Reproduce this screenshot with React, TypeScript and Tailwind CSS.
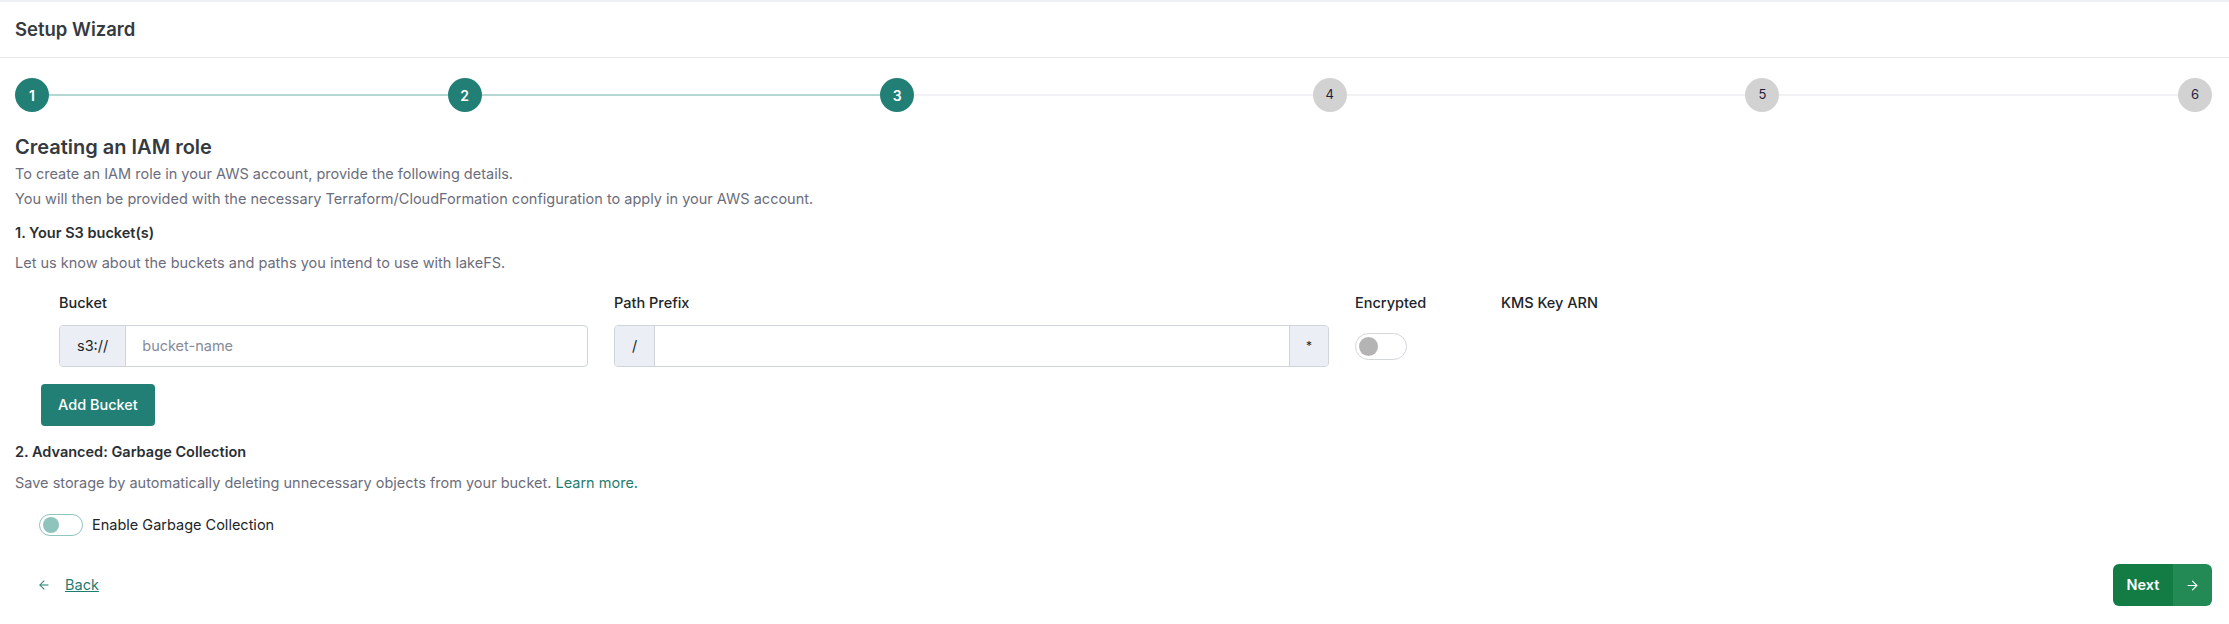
import { FC, useState } from "react";
import { ArrowLeft, ArrowRight } from "lucide-react";

const steps = [1, 2, 3, 4, 5, 6];
const current = 3;

const Stepper: FC = () => {
  return (
    <div className="flex items-center mt-[20px]">
      {steps.map((s, i) => (
        <div key={s} className={i === 0 ? "flex items-center" : "flex items-center flex-1"}>
          {i > 0 && (
            <div
              className={
                s <= current
                  ? "flex-1 h-[2px] bg-[#b5d7d2]"
                  : "flex-1 h-[2px] bg-[#f1f1f6]"
              }
            />
          )}
          <div
            className={
              s <= current
                ? "w-[34px] h-[34px] rounded-full bg-[#217f75] text-white text-[14px] font-semibold flex items-center justify-center"
                : "w-[34px] h-[34px] rounded-full bg-[#d2d2d2] text-[#1f1d3a] text-[13px] flex items-center justify-center"
            }
          >
            {s}
          </div>
        </div>
      ))}
    </div>
  );
};

const Toggle: FC<{ on: boolean; onClick: () => void; small?: boolean }> = ({ on, onClick, small }) => {
  if (small) {
    return (
      <button
        onClick={onClick}
        className="w-[44px] h-[22px] rounded-full border border-[#8fc5bd] flex items-center px-[3px] bg-white"
      >
        <span className={on ? "ml-auto w-[16px] h-[16px] rounded-full bg-[#217f75]" : "w-[16px] h-[16px] rounded-full bg-[#8fc4bc]"} />
      </button>
    );
  }
  return (
    <button
      onClick={onClick}
      className="w-[52px] h-[27px] rounded-full border border-[#d3d6da] flex items-center px-[3px] bg-white"
    >
      <span className={on ? "ml-auto w-[19px] h-[19px] rounded-full bg-[#217f75]" : "w-[19px] h-[19px] rounded-full bg-[#b4b4b4]"} />
    </button>
  );
};

export default function App() {
  const [encrypted, setEncrypted] = useState(false);
  const [gc, setGc] = useState(false);
  const [bucket, setBucket] = useState("");
  const [prefix, setPrefix] = useState("");

  return (
    <div className="min-h-screen bg-white font-['Inter',sans-serif] text-[#212529]">
      <div className="h-[2px] bg-[#eef0f5]" />
      <header className="h-[56px] border-b border-[#e5e6e8] px-[15px] flex items-center">
        <h1 className="text-[18.5px] font-semibold text-[#353a40]">Setup Wizard</h1>
      </header>

      <main className="pl-[15px] pr-[17px]">
        <Stepper />

        <h2 className="mt-[23px] text-[20px] leading-[24px] font-semibold text-[#353a40]">Creating an IAM role</h2>
        <div className="mt-[2px] text-[14.5px] leading-[25px] text-[#6b6d7c]">
          <p>To create an IAM role in your AWS account, provide the following details.</p>
          <p>You will then be provided with the necessary Terraform/CloudFormation configuration to apply in your AWS account.</p>
        </div>

        <h3 className="mt-[12px] text-[14.5px] leading-[20px] font-semibold text-[#2b2f33]">1. Your S3 bucket(s)</h3>
        <p className="mt-[10px] text-[14.5px] leading-[20px] text-[#6b6d7c]">
          Let us know about the buckets and paths you intend to use with lakeFS.
        </p>

        <div className="mt-[20px] ml-[44px] flex gap-[26px] text-[14.5px]">
          <div className="w-[529px]">
            <label className="block leading-[20px] font-medium">Bucket</label>
            <div className="mt-[12px] flex h-[42px] border border-[#ced4da] rounded-[4px] overflow-hidden">
              <span className="px-[17px] flex items-center bg-[#eceef5] border-r border-[#ced4da]">s3://</span>
              <input
                value={bucket}
                onChange={(e) => setBucket(e.target.value)}
                placeholder="bucket-name"
                className="flex-1 px-[16px] outline-none placeholder:text-[#878a99]"
              />
            </div>
          </div>
          <div className="w-[715px]">
            <label className="block leading-[20px] font-medium">Path Prefix</label>
            <div className="mt-[12px] flex h-[42px] border border-[#ced4da] rounded-[4px] overflow-hidden">
              <span className="w-[40px] flex items-center justify-center bg-[#eceef5] border-r border-[#ced4da]">/</span>
              <input
                value={prefix}
                onChange={(e) => setPrefix(e.target.value)}
                className="flex-1 px-[12px] outline-none"
              />
              <span className="w-[39px] flex items-center justify-center bg-[#eceef5] border-l border-[#ced4da] text-[12px]">*</span>
            </div>
          </div>
          <div className="w-[120px]">
            <label className="block leading-[20px] font-medium">Encrypted</label>
            <div className="mt-[12px] h-[42px] flex items-center">
              <Toggle on={encrypted} onClick={() => setEncrypted(!encrypted)} />
            </div>
          </div>
          <div>
            <label className="block leading-[20px] font-medium">KMS Key ARN</label>
          </div>
        </div>

        <button className="mt-[17px] ml-[26px] h-[42px] px-[17px] rounded-[4px] bg-[#217f75] text-white text-[14.5px] font-medium">
          Add Bucket
        </button>

        <h3 className="mt-[16px] text-[14.5px] leading-[20px] font-semibold text-[#2b2f33]">2. Advanced: Garbage Collection</h3>
        <p className="mt-[11px] text-[14.5px] leading-[20px] text-[#6b6d7c]">
          Save storage by automatically deleting unnecessary objects from your bucket.{" "}
          <a href="#" className="text-[#1f7c70]">Learn more.</a>
        </p>

        <div className="mt-[21px] ml-[24px] flex items-center gap-[9px]">
          <Toggle small on={gc} onClick={() => setGc(!gc)} />
          <span className="text-[14.5px]">Enable Garbage Collection</span>
        </div>

        <div className="mt-[28px] flex items-center justify-between">
          <a href="#" className="ml-[22px] flex items-center gap-[14px] text-[14.5px] text-[#1f7c70]">
            <ArrowLeft size={14} strokeWidth={1.75} />
            <span className="underline">Back</span>
          </a>
          <button className="flex h-[42px] rounded-[6px] overflow-hidden text-white text-[14.5px] font-semibold">
            <span className="w-[60px] flex items-center justify-center bg-[#137b44]">Next</span>
            <span className="w-[39px] flex items-center justify-center bg-[#238a55]">
              <ArrowRight size={15} strokeWidth={1.75} />
            </span>
          </button>
        </div>
      </main>
    </div>
  );
}
